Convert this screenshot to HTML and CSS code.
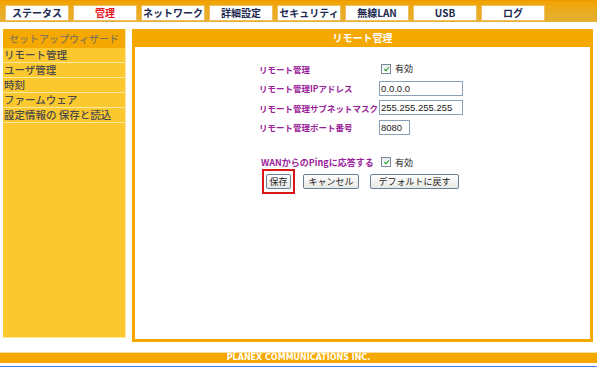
FILE: index.html
```html
<!DOCTYPE html>
<html>
	<head>
		<meta charset="UTF-8">
		<title>リモート管理</title>
		<link rel="stylesheet" href="styles.css">
	</head>
	<body>
		<div class="nav">
			<span class="tab">ステータス</span>
			<span class="tab on">管理</span>
			<span class="tab">ネットワーク</span>
			<span class="tab">詳細設定</span>
			<span class="tab">セキュリティ</span>
			<span class="tab">無線LAN</span>
			<span class="tab">USB</span>
			<span class="tab">ログ</span>
		</div>
		<div class="main">
			<div class="side">
				<div class="side-head">セットアップウィザード</div>
				<ul>
					<li>リモート管理</li>
					<li>ユーザ管理</li>
					<li>時刻</li>
					<li>ファームウェア</li>
					<li>設定情報の 保存と読込</li>
				</ul>
			</div>
			<div class="panel">
				<div class="panel-head">リモート管理</div>
				<div class="panel-body">
					<div class="form">
						<span class="label">リモート管理</span>
						<span class="val"><span class="check"></span>有効</span>
						<span class="label">リモート管理IPアドレス</span>
						<span class="val"><input class="txt" value="0.0.0.0"></span>
						<span class="label">リモート管理サブネットマスク</span>
						<span class="val"><input class="txt" value="255.255.255.255"></span>
						<span class="label">リモート管理ポート番号</span>
						<span class="val"><input class="txt short" value="8080"></span>
					</div>
					<div class="ping">
						<span class="label">WANからのPingに応答する</span>
						<span class="val"><span class="check"></span>有効</span>
					</div>
					<div class="buttons">
						<span class="save"><button>保存</button></span>
						<button>キャンセル</button>
						<button class="wide">デフォルトに戻す</button>
					</div>
				</div>
			</div>
		</div>
		<div class="foot">PLANEX COMMUNICATIONS INC.</div>
		<div class="line"></div>
	</body>
</html>
```
FILE: styles.css
```css
body{
	margin: 0;
	width: 600px;
	height: 367px;
	overflow: hidden;
	background: #fff;
	font-family: "Noto Sans CJK JP", "DejaVu Sans", sans-serif;
	font-size: 10px;
}
ul{
	padding: 0;
	margin: 0;
	list-style: none;
}
.nav{
	width: 597px;
	height: 22px;
	box-sizing: border-box;
	padding: 4px 5px 0;
	display: flex;
	gap: 4px;
	background: linear-gradient(#f2a400, #e8ad28 60%, #e6b030);
	border-top: 1px solid #f09800;
}
.tab{
	width: 62px;
	height: 14px;
	background: #fff;
	border: 1px solid #f0c060;
	text-align: center;
	font-weight: bold;
	font-size: 10px;
	line-height: 14px;
	color: #1c2a50;
}
.tab.on{
	color: #e8141c;
}
.main{
	display: flex;
	gap: 6px;
	margin-top: 7px;
	padding-left: 3px;
}
.side{
	width: 122px;
	height: 308px;
	background: #fcc830;
	border-bottom: 1px solid #fde8a0;
	border-right: 1px solid #fde8a0;
}
.side-head{
	height: 19px;
	background: #f5a800;
	color: #6a6a6a;
	text-align: center;
	line-height: 19px;
	font-size: 10px;
}
.side li{
	height: 14px;
	line-height: 14px;
	border-bottom: 1px solid #fde8a0;
	color: #4a4a4a;
	font-size: 10.5px;
	font-weight: 500;
	padding-left: 1px;
	white-space: nowrap;
}
.panel{
	width: 455px;
	height: 310px;
	border: 3px solid #f5a800;
	border-top: 0;
	background: #fff;
}
.panel-head{
	height: 18px;
	background: #f5a800;
	color: #fff;
	font-weight: bold;
	text-align: center;
	line-height: 17px;
	font-size: 10px;
}
.panel-body{
	padding-top: 12px;
}
.form{
	width: 204px;
	margin-left: 124px;
	display: grid;
	grid-template-columns: 120px 84px;
	grid-auto-rows: 19.5px;
	align-items: center;
}
.label{
	color: #992299;
	font-weight: bold;
	font-size: 8.5px;
	white-space: nowrap;
}
.val{
	display: flex;
	align-items: center;
	gap: 4px;
	color: #222;
	font-size: 9px;
	padding-left: 2px;
}
.form .val:has(.txt){
	padding-left: 0;
}
.check{
	width: 10px;
	height: 10px;
	box-sizing: border-box;
	border: 1px solid #7a8a9a;
	background: linear-gradient(#e8ecf0, #fff);
	position: relative;
}
.check::after{
	content: "";
	position: absolute;
	left: 3px;
	top: 1px;
	width: 2px;
	height: 4px;
	border: solid #20a020;
	border-width: 0 1.5px 1.5px 0;
	transform: rotate(40deg);
}
.txt{
	width: 84px;
	height: 15px;
	box-sizing: border-box;
	border: 1px solid #8aa0b8;
	padding: 0 1px;
	font-family: "Liberation Sans", sans-serif;
	font-size: 9.5px;
	color: #222;
	outline: none;
}
.txt.short{
	width: 31px;
}
.ping{
	display: flex;
	align-items: center;
	margin: 18px 0 0 126px;
	height: 14px;
}
.ping .label{
	font-size: 9px;
	width: 118px;
}
.buttons{
	display: flex;
	align-items: center;
	margin: 0 0 0 127px;
}
.save{
	border: 2px solid #d81818;
	padding: 2px 2px 3px;
	margin-right: 8px;
}
button{
	height: 15px;
	box-sizing: border-box;
	padding: 0;
	border: 1px solid #6a7e96;
	border-radius: 2px;
	background: linear-gradient(#fdfdfd, #e8e8e4);
	font-family: "Noto Sans CJK JP", sans-serif;
	font-size: 9px;
	line-height: 13px;
	color: #222;
	white-space: nowrap;
}
.buttons > button{
	width: 56px;
}
.buttons > button.wide{
	width: 89px;
	margin-left: 11px;
}
.save button{
	width: 25px;
}
.foot{
	width: 597px;
	height: 10px;
	margin-top: 10px;
	background: #f5a800;
	border-top: 1px solid #fde0a0;
	color: #fff;
	font-family: "DejaVu Sans", sans-serif;
	font-weight: bold;
	font-size: 8px;
	line-height: 10px;
	text-align: center;
}
.line{
	width: 597px;
	height: 1px;
	margin-top: 3px;
	background: #4a80f0;
}
```
